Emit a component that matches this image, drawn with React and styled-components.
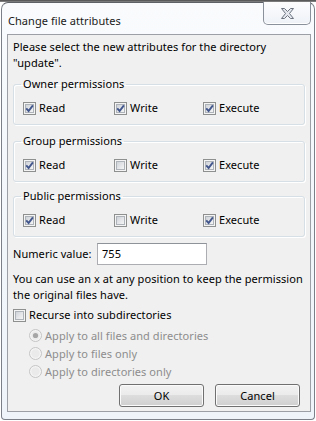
import styled, { createGlobalStyle } from "styled-components";

const GlobalStyle = createGlobalStyle`
  html, body {
    margin: 0;
    padding: 0;
    background: #ffffff;
  }
  body {
    font-family: "Noto Sans", "Open Sans", sans-serif;
    font-size: 11px;
    letter-spacing: 0.06px;
    color: #000;
  }
  * {
    box-sizing: border-box;
  }
`;

const Screen = styled.div`
  width: 316px;
  height: 421px;
  overflow: hidden;
  padding: 2px 0 0 1px;
  background: linear-gradient(180deg, #4a4a4a 0px, #8a8a8a 2px, #ffffff 2px);
`;

const Window = styled.div`
  width: 314px;
  height: 418px;
  display: flex;
  flex-direction: column;
  border: 1px solid #7b8088;
  border-top-color: #5e6267;
  border-radius: 7px 7px 4px 4px;
  background: linear-gradient(180deg, #f9fbfd 0%, #f1f6fb 60%, #eef4fa 100%);
  padding: 0 3px 7px 5px;
`;

const TitleBar = styled.div`
  height: 31px;
  flex: none;
  display: flex;
  align-items: flex-start;
`;

const Title = styled.div`
  padding: 10px 0 0 1px;
  line-height: 16px;
  color: #1a1a1a;
`;

const CloseButton = styled.div`
  margin-left: auto;
  margin-top: -1px;
  width: 48px;
  height: 23px;
  display: flex;
  align-items: center;
  justify-content: center;
  border: 1px solid #8b919a;
  border-top: none;
  border-radius: 0 0 5px 5px;
  background: linear-gradient(180deg, #fdfdfe 0%, #eef2f7 100%);
  box-shadow: inset 0 -1px 0 #ffffff;
`;

const Panel = styled.div`
  height: 378px;
  flex: none;
  border: 1px solid #9ca0a6;
  background: #f0f0f0;
  padding: 4px 5px 0 5px;
  display: flex;
  flex-direction: column;
`;

const Text = styled.div`
  line-height: 16px;
  white-space: nowrap;
  margin-top: ${(p) => p.$top || 0}px;
`;

const Group = styled.fieldset`
  margin: ${(p) => p.$top}px 0 0 0;
  padding: 8px 9px 8px 9px;
  border: 1px solid #d5dfe5;
  border-radius: 3px;
  box-shadow: inset 1px 1px 0 #ffffff, 1px 1px 0 #ffffff;
  min-width: 0;
`;

const Legend = styled.legend`
  padding: 0 2px;
  margin-left: -2px;
  line-height: 16px;
`;

const CheckRow = styled.div`
  display: grid;
  grid-template-columns: 91px 89px auto;
  height: 16px;
`;

const CheckLabel = styled.label`
  display: inline-flex;
  align-items: center;
  gap: 3px;
  line-height: 16px;
  height: 16px;
  margin-top: ${(p) => p.$top || 0}px;
`;

const Box = styled.svg`
  width: 13px;
  height: 13px;
  flex: none;
`;

const NumericRow = styled.div`
  display: flex;
  align-items: center;
  margin-top: 6px;
`;

const NumericLabel = styled.span`
  width: 84px;
  flex: none;
  white-space: nowrap;
  line-height: 16px;
`;

const NumericInput = styled.div`
  width: 110px;
  height: 22px;
  border: 1px solid #abadb3;
  border-top-color: #8e9299;
  background: #ffffff;
  padding: 0 4px;
  line-height: 20px;
`;

const RadioList = styled.div`
  margin-top: 3px;
  padding-left: 16px;
  display: flex;
  flex-direction: column;
`;

const RadioLabel = styled.label`
  display: inline-flex;
  align-items: center;
  gap: 3px;
  height: 18px;
  color: #8d8d8d;
`;

const ButtonRow = styled.div`
  display: flex;
  justify-content: flex-end;
  gap: 11px;
  margin-top: 4px;
  padding-right: 5px;
`;

const Button = styled.div`
  width: 85px;
  height: 23px;
  display: flex;
  align-items: center;
  justify-content: center;
  border: 1px solid #707070;
  border-radius: 3px;
  background: linear-gradient(180deg, #f2f2f2 0%, #ebebeb 49%, #dddddd 50%, #cfcfcf 100%);
  box-shadow: inset 0 0 0 1px #fbfbfb;
`;

function CheckBox({ checked }) {
  return (
    <Box viewBox="0 0 13 13">
      <defs>
        <linearGradient id="cbIn" x1="0" y1="0" x2="1" y2="1">
          <stop offset="0" stopColor="#cdd1d7" />
          <stop offset="1" stopColor="#f7f7f7" />
        </linearGradient>
      </defs>
      <rect x="0.5" y="0.5" width="12" height="12" fill="#f4f4f4" stroke="#8e8f8f" />
      <rect x="2.5" y="2.5" width="8" height="8" fill="url(#cbIn)" stroke="#aeb3b9" />
      {checked && (
        <path d="M3.2 6.4 L5.6 9 L9.9 3.4" fill="none" stroke="#43578d" strokeWidth="1.9" />
      )}
    </Box>
  );
}

function Radio({ checked }) {
  return (
    <Box viewBox="0 0 13 13">
      <circle cx="6.5" cy="6.5" r="6" fill="#f4f4f4" stroke="#c4c4c4" />
      <circle cx="6.5" cy="6.5" r="4.2" fill="#eaeaea" />
      {checked && <circle cx="6.5" cy="6.5" r="2.6" fill="#a6a6a6" />}
    </Box>
  );
}

const perms = [
  { title: "Owner permissions", read: true, write: true, exec: true, top: 5 },
  { title: "Group permissions", read: true, write: false, exec: true, top: 8 },
  { title: "Public permissions", read: true, write: false, exec: true, top: 6 },
];

export default function App() {
  return (
    <>
      <GlobalStyle />
      <Screen>
        <Window>
          <TitleBar>
            <Title>Change file attributes</Title>
            <CloseButton>
              <svg width="13" height="11" viewBox="0 0 13 11">
                <polygon
                  points="0.5,0.5 3.5,0.5 6.5,3.5 9.5,0.5 12.5,0.5 8.5,5.5 12.5,10.5 9.5,10.5 6.5,7.5 3.5,10.5 0.5,10.5 4.5,5.5"
                  fill="#e4e8ee"
                  stroke="#6d7480"
                />
              </svg>
            </CloseButton>
          </TitleBar>
          <Panel>
            <Text>
              Please select the new attributes for the directory
              <br />
              "update".
            </Text>
            {perms.map((g) => (
              <Group key={g.title} $top={g.top}>
                <Legend>{g.title}</Legend>
                <CheckRow>
                  <CheckLabel>
                    <CheckBox checked={g.read} />
                    Read
                  </CheckLabel>
                  <CheckLabel>
                    <CheckBox checked={g.write} />
                    Write
                  </CheckLabel>
                  <CheckLabel>
                    <CheckBox checked={g.exec} />
                    Execute
                  </CheckLabel>
                </CheckRow>
              </Group>
            ))}
            <NumericRow>
              <NumericLabel>Numeric value:</NumericLabel>
              <NumericInput>755</NumericInput>
            </NumericRow>
            <Text $top={6}>
              You can use an x at any position to keep the permission
              <br />
              the original files have.
            </Text>
            <CheckLabel $top={4}>
              <CheckBox checked={false} />
              Recurse into subdirectories
            </CheckLabel>
            <RadioList>
              <RadioLabel>
                <Radio checked />
                Apply to all files and directories
              </RadioLabel>
              <RadioLabel>
                <Radio />
                Apply to files only
              </RadioLabel>
              <RadioLabel>
                <Radio />
                Apply to directories only
              </RadioLabel>
            </RadioList>
            <ButtonRow>
              <Button>OK</Button>
              <Button>Cancel</Button>
            </ButtonRow>
          </Panel>
        </Window>
      </Screen>
    </>
  );
}
